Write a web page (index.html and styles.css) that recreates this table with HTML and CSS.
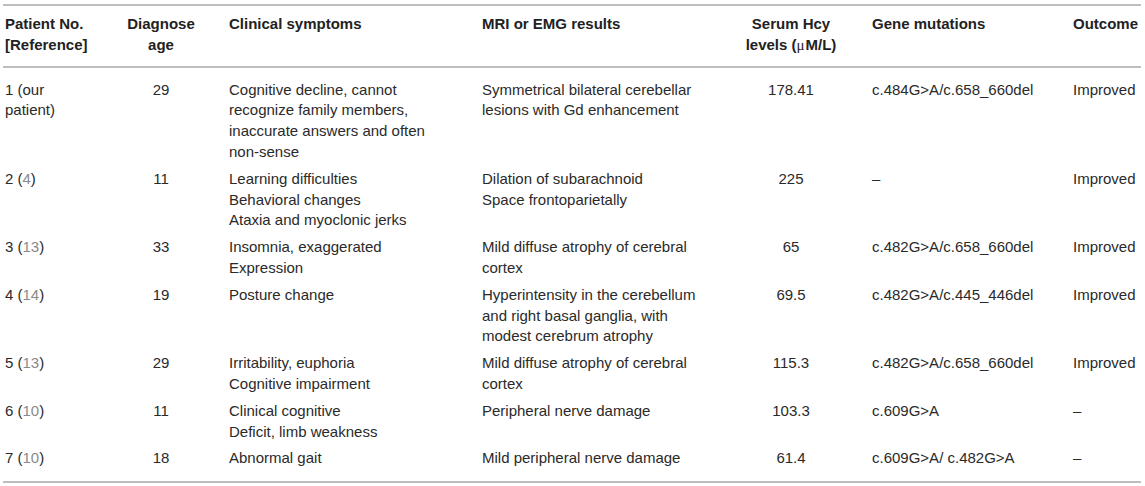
FILE: index.html
```html
<!DOCTYPE html>
<html>
<head>
  <title>Reported cases</title>
  <link rel="stylesheet" href="styles.css">
</head>
<body>
  <div id="container">
    <table class="cases">
      <colgroup>
        <col class="c-no">
        <col class="c-age">
        <col class="c-sym">
        <col class="c-mri">
        <col class="c-hcy">
        <col class="c-gene">
        <col class="c-out">
      </colgroup>
      <thead>
        <tr>
          <th>Patient No.<br>[Reference]</th>
          <th class="mid">Diagnose<br>age</th>
          <th>Clinical symptoms</th>
          <th>MRI or EMG results</th>
          <th class="mid">Serum Hcy<br>levels (<span class="mu">μ</span>M/L)</th>
          <th>Gene mutations</th>
          <th>Outcome</th>
        </tr>
      </thead>
      <tbody>
        <tr>
          <td>1 (our<br>patient)</td>
          <td class="mid">29</td>
          <td>Cognitive decline, cannot<br>recognize family members,<br>inaccurate answers and often<br>non-sense</td>
          <td>Symmetrical bilateral cerebellar<br>lesions with Gd enhancement</td>
          <td class="mid">178.41</td>
          <td>c.484G&gt;A/c.658_660del</td>
          <td>Improved</td>
        </tr>
        <tr>
          <td>2 (<a href="#">4</a>)</td>
          <td class="mid">11</td>
          <td>Learning difficulties<br>Behavioral changes<br>Ataxia and myoclonic jerks</td>
          <td>Dilation of subarachnoid<br>Space frontoparietally</td>
          <td class="mid">225</td>
          <td>–</td>
          <td>Improved</td>
        </tr>
        <tr>
          <td>3 (<a href="#">13</a>)</td>
          <td class="mid">33</td>
          <td>Insomnia, exaggerated<br>Expression</td>
          <td>Mild diffuse atrophy of cerebral<br>cortex</td>
          <td class="mid">65</td>
          <td>c.482G&gt;A/c.658_660del</td>
          <td>Improved</td>
        </tr>
        <tr>
          <td>4 (<a href="#">14</a>)</td>
          <td class="mid">19</td>
          <td>Posture change</td>
          <td>Hyperintensity in the cerebellum<br>and right basal ganglia, with<br>modest cerebrum atrophy</td>
          <td class="mid">69.5</td>
          <td>c.482G&gt;A/c.445_446del</td>
          <td>Improved</td>
        </tr>
        <tr>
          <td>5 (<a href="#">13</a>)</td>
          <td class="mid">29</td>
          <td>Irritability, euphoria<br>Cognitive impairment</td>
          <td>Mild diffuse atrophy of cerebral<br>cortex</td>
          <td class="mid">115.3</td>
          <td>c.482G&gt;A/c.658_660del</td>
          <td>Improved</td>
        </tr>
        <tr>
          <td>6 (<a href="#">10</a>)</td>
          <td class="mid">11</td>
          <td>Clinical cognitive<br>Deficit, limb weakness</td>
          <td>Peripheral nerve damage</td>
          <td class="mid">103.3</td>
          <td>c.609G&gt;A</td>
          <td>–</td>
        </tr>
        <tr>
          <td>7 (<a href="#">10</a>)</td>
          <td class="mid">18</td>
          <td>Abnormal gait</td>
          <td>Mild peripheral nerve damage</td>
          <td class="mid">61.4</td>
          <td>c.609G&gt;A/ c.482G&gt;A</td>
          <td>–</td>
        </tr>
      </tbody>
    </table>
  </div>
</body>
</html>
```

FILE: styles.css
```css
body {
  margin: 0;
  background: #fff;
  font-family: "Liberation Sans", Arial, Helvetica, sans-serif;
  color: #2a2a2a;
}

#container {
  padding: 4px 0 0 3px;
}

.cases {
  width: 1138px;
  table-layout: fixed;
  border-collapse: collapse;
  border-top: 2px solid #bdbdbd;
  border-bottom: 2px solid #bdbdbd;
  font-size: 15px;
  line-height: 20.8px;
}

.c-no { width: 90px; }
.c-age { width: 134px; }
.c-sym { width: 253px; }
.c-mri { width: 230px; }
.c-hcy { width: 160px; }
.c-gene { width: 201px; }
.c-out { width: 70px; }

.cases th,
.cases td {
  padding: 3px 0 3px 2px;
  text-align: left;
  vertical-align: top;
  white-space: nowrap;
}

.cases th {
  font-weight: bold;
  color: #222;
  padding-top: 8px;
  padding-bottom: 10px;
}

.cases thead tr {
  border-bottom: 2px solid #bdbdbd;
}

.cases tbody tr:first-child td {
  padding-top: 12px;
}

.cases tbody tr:last-child td {
  padding-bottom: 12px;
}

.cases .mid {
  text-align: center;
}

.mu {
  font-family: "Liberation Serif", serif;
  font-weight: normal;
  padding-right: 1px;
}

.cases a {
  color: #8a8a8a;
  text-decoration: none;
}
```
